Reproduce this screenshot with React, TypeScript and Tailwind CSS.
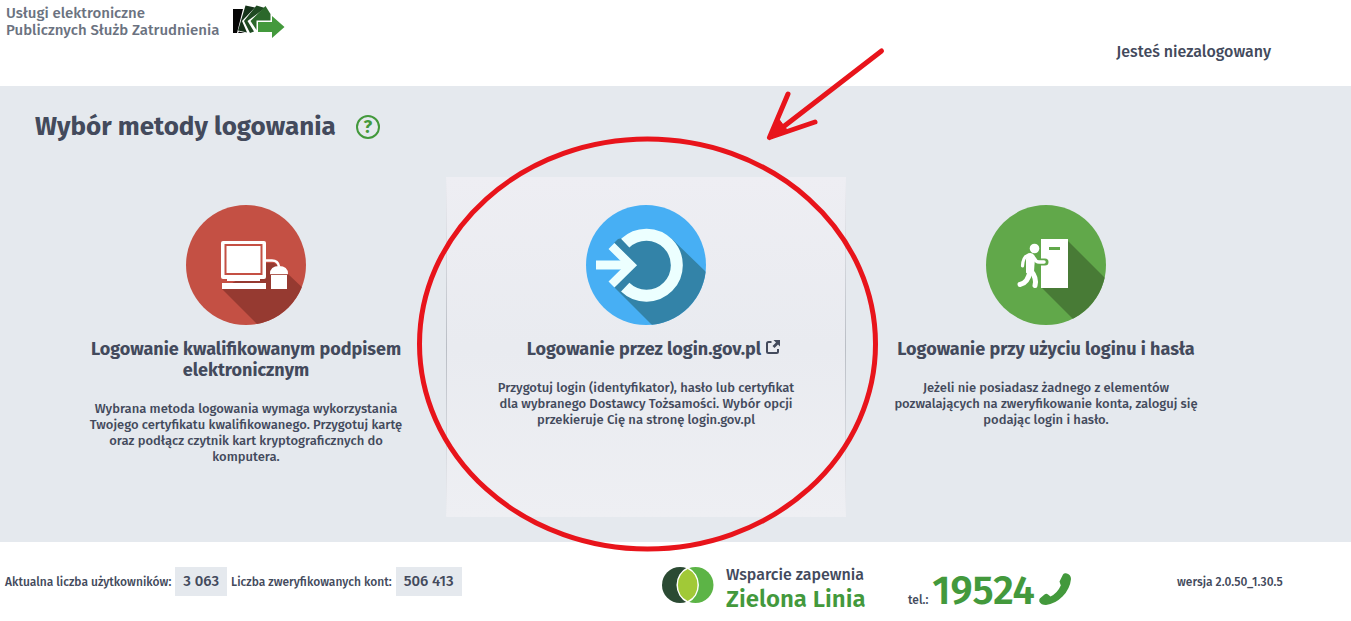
import React from "react";

interface LoginMethod {
  id: string;
  title: string;
  description: string;
  icon: React.ReactNode;
  highlighted?: boolean;
}

const SignatureIcon = () => (
  <svg viewBox="0 0 120 120" className="h-[120px] w-[120px]" aria-hidden="true">
    <clipPath id="signature-clip">
      <circle cx="60" cy="60" r="60" />
    </clipPath>
    <g clipPath="url(#signature-clip)">
      <rect width="120" height="120" fill="#c45044" />
      <path d="M36 84 72 120H120V86L102 69 88 58H80Z" fill="#963a31" />
    </g>
    <rect x="35" y="36" width="45" height="38" rx="2" fill="#fff" />
    <path d="M41 74h33v2H41z" fill="#fff" />
    <rect x="39.5" y="40" width="36" height="29" fill="none" stroke="#c45044" strokeWidth="2" />
    <path d="M36 78h44v6H36z" fill="#fff" />
    <path d="M80 55.500h6q6 0 7 6" fill="none" stroke="#fff" strokeWidth="2.500" />
    <path d="M84 69q0-8 9-8t9 8zM85 70h16v14H85z" fill="#fff" />
    <path d="M84 69.500h18" stroke="#b06057" />
  </svg>
);

const GovIcon = () => (
  <svg viewBox="0 0 120 120" className="h-[120px] w-[120px]" aria-hidden="true">
    <clipPath id="gov-clip">
      <circle cx="60" cy="60" r="60" />
    </clipPath>
    <g clipPath="url(#gov-clip)">
      <rect width="120" height="120" fill="#47aff4" />
      <path d="M32 34 60 28 86 34 120 67V120H66L28 82 50 60 28 38Z" fill="#3383a8" />
    </g>
    <path
      d="M39.200 38.200A30.500 30.500 0 1 1 39.200 82.200"
      fill="none"
      stroke="#ecffff"
      strokeWidth="12"
    />
    <path d="M10 60H42" stroke="#ecffff" strokeWidth="9" />
    <path d="M25.500 41 45 60.300 25.500 79.500" fill="none" stroke="#ecffff" strokeWidth="8.500" />
  </svg>
);

const PasswordIcon = () => (
  <svg viewBox="0 0 120 120" className="h-[120px] w-[120px]" aria-hidden="true">
    <clipPath id="password-clip">
      <circle cx="60" cy="60" r="60" />
    </clipPath>
    <g clipPath="url(#password-clip)">
      <rect width="120" height="120" fill="#61a84a" />
      <path d="M82 36 120 74V120H93L56 83Z" fill="#487b36" />
    </g>
    <path d="M55 34h27v49H55z" fill="#fff" />
    <path d="M63 43.500h11" stroke="#61a84a" strokeWidth="3" />
    <path d="M48 54 51 57H59" fill="none" stroke="#61a84a" strokeWidth="7" strokeLinecap="round" />
    <circle cx="48.500" cy="43.500" r="4.800" fill="#fff" />
    <path d="M41 49q6-3 8 3l-1 15-8 1V54z" fill="#fff" />
    <g fill="none" stroke="#fff" strokeLinecap="round" strokeLinejoin="round">
      <path d="M43 50q-6 1-6.500 11" strokeWidth="3.200" />
      <path d="M48 53q2 4 5 4h5" strokeWidth="3.500" />
      <path d="M44 66q-2 12-10 13.500" strokeWidth="5" />
      <path d="M45 66q6 7 4 14.500" strokeWidth="5" />
    </g>
  </svg>
);

const PortalLogo = () => (
  <svg viewBox="0 0 52 34" className="h-[34px] w-[52px]" aria-hidden="true">
    <path d="M0 4h10L4 28H0z" fill="#050505" />
    <path d="M5 28h7l-6-1.500z" fill="#050505" />
    <path d="M12.500 0.500 22 2.500 9 16 14 27.500 5 25.500Z" fill="#16331a" />
    <path d="M23.500 0.500 32 3 14.500 16 21 26.500 17 28 11 16Z" fill="#1f4a22" />
    <path d="M32.500 1 37.500 9 37.500 15.500H23.500v9.500L17.500 16Z" fill="#2b682b" />
    <path d="M25 17h14v-6l12.500 11L39 33v-6H25z" fill="#43993c" />
  </svg>
);

const GreenLineLogo = () => (
  <svg viewBox="0 0 52 36" className="h-9 w-[52px]" aria-hidden="true">
    <circle cx="18" cy="18" r="18" fill="#2b4a33" />
    <circle cx="33.500" cy="18" r="18" fill="#5cb446" />
    <path d="M25.700 1A19 19 0 0 1 25.700 35 19 19 0 0 1 25.700 1Z" fill="#a1c937" stroke="#fff" strokeWidth="1.500" />
  </svg>
);

const PhoneIcon = () => (
  <svg viewBox="0 0 32 32" className="mb-1 h-8 w-8" fill="currentColor" aria-hidden="true">
    <path d="M20.500 8.500 24 1.500Q25 0 27 0.300 32 1.500 32 6 31 16 23.500 23.500 16 31 7 32 2 32 0.300 28.500 0 26.500 0.800 25.500L5.500 21.500Q7.500 20 9 21.500L11.500 23.500Q18.500 20 21.800 12.500Z" />
  </svg>
);

const ExternalIcon = () => (
  <svg viewBox="0 0 16 16" className="-mr-4 ml-1 inline-block h-4 w-4 align-baseline" aria-hidden="true">
    <path
      d="M6.500 3H3.500Q2 3 2 4.500V12.500Q2 14 3.500 14H11.500Q13 14 13 12.500V10"
      fill="none"
      stroke="currentColor"
      strokeWidth="2"
    />
    <path d="M8.500 1H15v6.500l-2-2L9.500 9 7.500 7 11 3.500z" fill="currentColor" />
  </svg>
);

// Odręczne zaznaczenie zalecanej metody
const Highlight = () => (
  <svg
    viewBox="0 0 480 520"
    className="pointer-events-none absolute -top-[135px] left-1/2 h-[520px] w-[480px] -translate-x-[236px]"
    fill="none"
    stroke="#e8141b"
    strokeWidth="5"
    strokeLinecap="round"
    strokeLinejoin="round"
    aria-hidden="true"
  >
    <ellipse cx="237.500" cy="302" rx="228" ry="205" />
    <path d="M471.500 9 359.500 95.500M378 52 359.500 95.500 405 80" />
    <path d="M360 95 368 76 374 84 378 89Z" fill="#e8141b" strokeWidth="1" />
  </svg>
);

const METHODS: LoginMethod[] = [
  {
    id: "signature",
    title: "Logowanie kwalifikowanym podpisem elektronicznym",
    description:
      "Wybrana metoda logowania wymaga wykorzystania Twojego certyfikatu kwalifikowanego. Przygotuj kartę oraz podłącz czytnik kart kryptograficznych do komputera.",
    icon: <SignatureIcon />,
  },
  {
    id: "gov",
    title: "Logowanie przez login.gov.pl",
    description:
      "Przygotuj login (identyfikator), hasło lub certyfikat dla wybranego Dostawcy Tożsamości. Wybór opcji przekieruje Cię na stronę login.gov.pl",
    icon: <GovIcon />,
    highlighted: true,
  },
  {
    id: "password",
    title: "Logowanie przy użyciu loginu i hasła",
    description:
      "Jeżeli nie posiadasz żadnego z elementów pozwalających na zweryfikowanie konta, zaloguj się podając login i hasło.",
    icon: <PasswordIcon />,
  },
];

const MethodCard: React.FC<{ method: LoginMethod }> = ({ method }) => (
  <div className="relative flex">
    <a
      href={`#${method.id}`}
      className={`flex min-h-[340px] w-full flex-col items-center px-9 pt-7 text-center ${
        method.highlighted
          ? "bg-linear-to-b from-[#eeeef3] via-[#e9ebf0] to-[#eeeff3]"
          : ""
      }`}
    >
      {method.icon}
      <h2 className="mt-3.5 text-[18px] leading-[21px] font-bold">
        {method.title}
        {method.highlighted && <ExternalIcon />}
      </h2>
      <p className="mt-5 px-1.5 text-[13px] leading-4 font-medium">{method.description}</p>
    </a>
    {method.highlighted && (
      <>
        <span className="absolute inset-y-0 left-0 w-px bg-linear-to-b from-transparent via-[#babec5] to-transparent" />
        <span className="absolute inset-y-0 right-0 w-px bg-linear-to-b from-transparent via-[#babec5] to-transparent" />
        <Highlight />
      </>
    )}
  </div>
);

const App: React.FC = () => {
  return (
    <div className="min-h-screen overflow-x-hidden bg-white font-['Fira_Sans','Noto_Sans',sans-serif] text-[#434a5c]">
      <header className="flex h-[86px] items-start justify-between pr-20 pl-[6px]">
        <div className="flex gap-3.5 pt-[5px]">
          <p className="text-[15px] leading-[17px] font-medium text-[#6b7280]">
            Usługi elektroniczne
            <br />
            Publicznych Służb Zatrudnienia
          </p>
          <PortalLogo />
        </div>
        <p className="pt-10 text-[16px] leading-6 font-medium">Jesteś niezalogowany</p>
      </header>

      <main className="bg-[#e5e9ee] pb-[25px]">
        <div className="flex h-[91px] items-center gap-5 pb-2.5 pl-[35px]">
          <h1 className="text-[26px] leading-8 font-bold">Wybór metody logowania</h1>
          <button
            type="button"
            aria-label="Pomoc"
            className="flex h-6 w-6 items-center justify-center rounded-full border-2 border-[#43993c] text-[18px] leading-5 font-bold text-[#43993c]"
          >
            ?
          </button>
        </div>
        <div className="grid grid-cols-3 pr-[105px] pl-[46px]">
          {METHODS.map((method) => (
            <MethodCard key={method.id} method={method} />
          ))}
        </div>
      </main>

      <footer className="grid grid-cols-[657fr_246fr_269fr_174fr] pt-[25px] pl-[5px]">
        <div className="flex h-[29px] items-center gap-1 text-[12px] font-medium">
          <span>Aktualna liczba użytkowników:</span>
          <span className="bg-[#e5e9ee] px-2 text-[15px] leading-[29px]">3 063</span>
          <span>Liczba zweryfikowanych kont:</span>
          <span className="bg-[#e5e9ee] px-2 text-[15px] leading-[29px]">506 413</span>
        </div>
        <div className="flex items-start gap-3">
          <GreenLineLogo />
          <p className="-mt-1 text-[16px] leading-6 font-medium">
            Wsparcie zapewnia
            <br />
            <strong className="text-[24px] font-semibold text-[#43993c]">Zielona Linia</strong>
          </p>
        </div>
        <p className="flex items-baseline gap-1 text-[12px] font-medium">
          tel.:
          <a href="tel:19524" className="flex items-center gap-1 text-[40px] leading-12 font-semibold text-[#43993c]">
            19524
            <PhoneIcon />
          </a>
        </p>
        <p className="text-[12px] leading-[30px] font-medium">wersja 2.0.50_1.30.5</p>
      </footer>
    </div>
  );
};

export default App;
